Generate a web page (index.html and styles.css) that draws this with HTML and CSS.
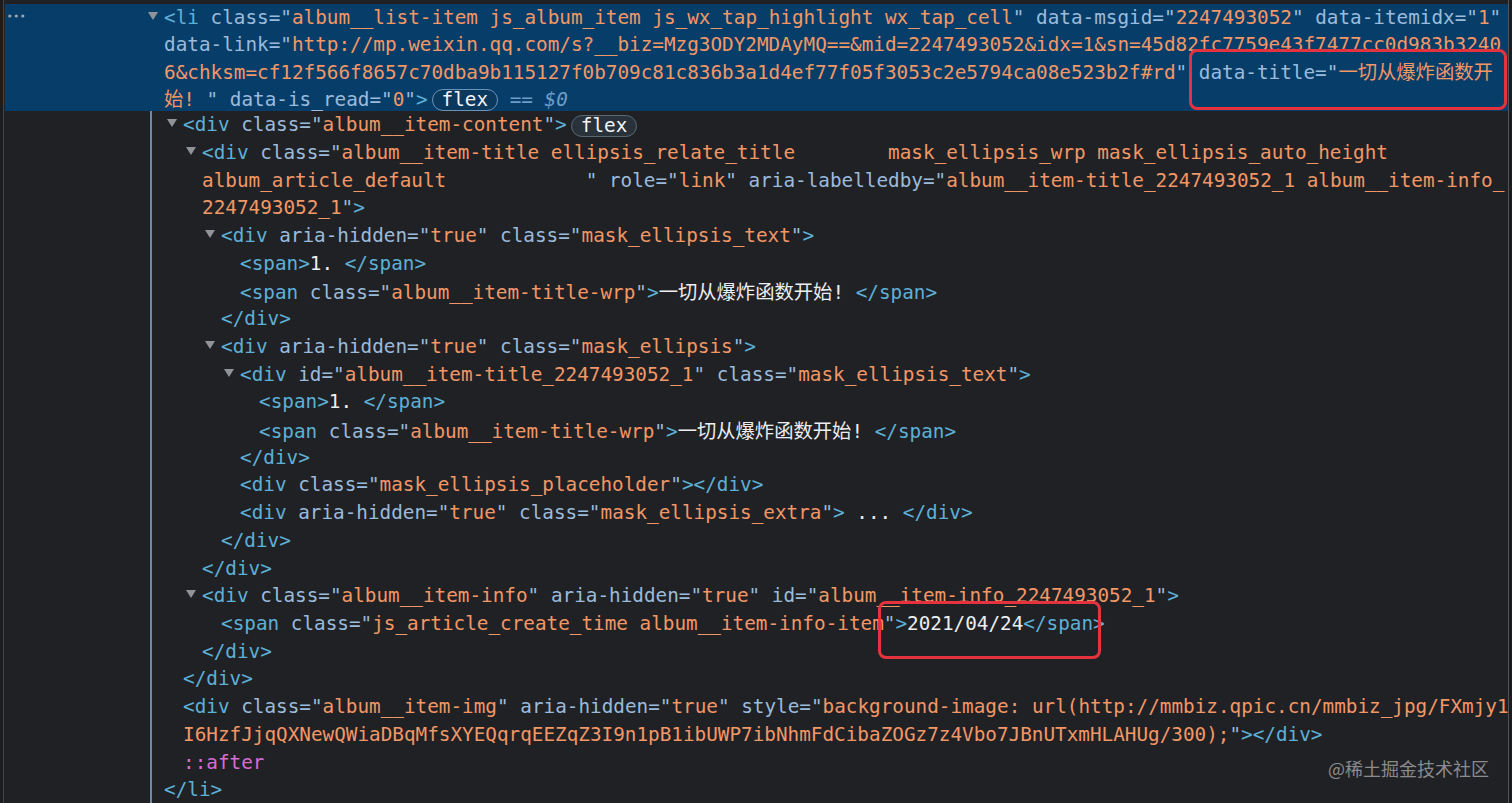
FILE: index.html
```html
<!DOCTYPE html>
<html lang="zh-CN">
<head>
<meta charset="utf-8">
<title>Elements</title>
<link rel="stylesheet" href="styles.css">
</head>
<body>
<div class="app">
  <div class="edge"></div>
  <div class="panel">
    <div class="selected">
      <div class="brow">
        <div class="gut">
          <svg class="dots" width="17" height="4" viewBox="0 0 17 4"><circle cx="1.8" cy="2" r="1.6"/><circle cx="8.3" cy="2" r="1.6"/><circle cx="14.8" cy="2" r="1.6"/></svg>
          <span class="tri"></span>
        </div>
        <span class="code"><span class="t">&lt;li</span> <span class="n">class="</span><span class="v">album__list-item js_album_item js_wx_tap_highlight wx_tap_cell</span><span class="n">"</span> <span class="n">data-msgid="</span><span class="v">2247493052</span><span class="n">"</span> <span class="n">data-itemidx="</span><span class="v">1</span><span class="n">"</span></span>
      </div>
      <div class="brow cont">
        <span class="code"><span class="n">data-link="</span><span class="v">http://mp.weixin.qq.com/s?__biz=Mzg3ODY2MDAyMQ==&amp;mid=2247493052&amp;idx=1&amp;sn=45d82fc7759e43f7477cc0d983b3240</span></span>
      </div>
      <div class="brow cont">
        <span class="code"><span class="v">6&amp;chksm=cf12f566f8657c70dba9b115127f0b709c81c836b3a1d4ef77f05f3053c2e5794ca08e523b2f#rd</span><span class="n">"</span> <span class="n">data-title="</span><span class="v">一切从爆炸函数开</span></span>
      </div>
      <div class="brow cont">
        <span class="code"><span class="v">始! </span><span class="n">"</span> <span class="n">data-is_read="</span><span class="v">0</span><span class="n">"</span><span class="t">&gt;</span><span class="badge badge-sel">flex</span><span class="eq"> == $0</span></span>
      </div>
    </div>

    <div class="tree">
      <div class="row l1"><span class="tri"></span><span class="code"><span class="t">&lt;div</span> <span class="n">class="</span><span class="v">album__item-content</span><span class="n">"</span><span class="t">&gt;</span><span class="badge">flex</span></span></div>
      <div class="row l2"><span class="tri"></span><span class="code"><span class="t">&lt;div</span> <span class="n">class="</span><span class="v">album__item-title ellipsis_relate_title        mask_ellipsis_wrp mask_ellipsis_auto_height</span></span></div>
      <div class="row l2"><span class="code"><span class="v">album_article_default            </span><span class="n">"</span> <span class="n">role="</span><span class="v">link</span><span class="n">"</span> <span class="n">aria-labelledby="</span><span class="v">album__item-title_2247493052_1 album__item-info_</span></span></div>
      <div class="row l2"><span class="code"><span class="v">2247493052_1</span><span class="n">"</span><span class="t">&gt;</span></span></div>
      <div class="row l3"><span class="tri"></span><span class="code"><span class="t">&lt;div</span> <span class="n">aria-hidden="</span><span class="v">true</span><span class="n">"</span> <span class="n">class="</span><span class="v">mask_ellipsis_text</span><span class="n">"</span><span class="t">&gt;</span></span></div>
      <div class="row l4"><span class="code"><span class="t">&lt;span&gt;</span><span class="x">1. </span><span class="t">&lt;/span&gt;</span></span></div>
      <div class="row l4"><span class="code"><span class="t">&lt;span</span> <span class="n">class="</span><span class="v">album__item-title-wrp</span><span class="n">"</span><span class="t">&gt;</span><span class="x">一切从爆炸函数开始! </span><span class="t">&lt;/span&gt;</span></span></div>
      <div class="row l3"><span class="code"><span class="t">&lt;/div&gt;</span></span></div>
      <div class="row l3"><span class="tri"></span><span class="code"><span class="t">&lt;div</span> <span class="n">aria-hidden="</span><span class="v">true</span><span class="n">"</span> <span class="n">class="</span><span class="v">mask_ellipsis</span><span class="n">"</span><span class="t">&gt;</span></span></div>
      <div class="row l4"><span class="tri"></span><span class="code"><span class="t">&lt;div</span> <span class="n">id="</span><span class="v">album__item-title_2247493052_1</span><span class="n">"</span> <span class="n">class="</span><span class="v">mask_ellipsis_text</span><span class="n">"</span><span class="t">&gt;</span></span></div>
      <div class="row l5"><span class="code"><span class="t">&lt;span&gt;</span><span class="x">1. </span><span class="t">&lt;/span&gt;</span></span></div>
      <div class="row l5"><span class="code"><span class="t">&lt;span</span> <span class="n">class="</span><span class="v">album__item-title-wrp</span><span class="n">"</span><span class="t">&gt;</span><span class="x">一切从爆炸函数开始! </span><span class="t">&lt;/span&gt;</span></span></div>
      <div class="row l4"><span class="code"><span class="t">&lt;/div&gt;</span></span></div>
      <div class="row l4"><span class="code"><span class="t">&lt;div</span> <span class="n">class="</span><span class="v">mask_ellipsis_placeholder</span><span class="n">"</span><span class="t">&gt;&lt;/div&gt;</span></span></div>
      <div class="row l4"><span class="code"><span class="t">&lt;div</span> <span class="n">aria-hidden="</span><span class="v">true</span><span class="n">"</span> <span class="n">class="</span><span class="v">mask_ellipsis_extra</span><span class="n">"</span><span class="t">&gt;</span><span class="x"> ... </span><span class="t">&lt;/div&gt;</span></span></div>
      <div class="row l3"><span class="code"><span class="t">&lt;/div&gt;</span></span></div>
      <div class="row l2"><span class="code"><span class="t">&lt;/div&gt;</span></span></div>
      <div class="row l2"><span class="tri"></span><span class="code"><span class="t">&lt;div</span> <span class="n">class="</span><span class="v">album__item-info</span><span class="n">"</span> <span class="n">aria-hidden="</span><span class="v">true</span><span class="n">"</span> <span class="n">id="</span><span class="v">album__item-info_2247493052_1</span><span class="n">"</span><span class="t">&gt;</span></span></div>
      <div class="row l3"><span class="code"><span class="t">&lt;span</span> <span class="n">class="</span><span class="v">js_article_create_time album__item-info-item</span><span class="n">"</span><span class="t">&gt;</span><span class="x">2021/04/24</span><span class="t">&lt;/span&gt;</span></span></div>
      <div class="row l2"><span class="code"><span class="t">&lt;/div&gt;</span></span></div>
      <div class="row l1"><span class="code"><span class="t">&lt;/div&gt;</span></span></div>
      <div class="row l1"><span class="code"><span class="t">&lt;div</span> <span class="n">class="</span><span class="v">album__item-img</span><span class="n">"</span> <span class="n">aria-hidden="</span><span class="v">true</span><span class="n">"</span> <span class="n">style="</span><span class="v">background-image: url(http://mmbiz.qpic.cn/mmbiz_jpg/FXmjy1</span></span></div>
      <div class="row l1"><span class="code"><span class="v">I6HzfJjqQXNewQWiaDBqMfsXYEQqrqEEZqZ3I9n1pB1ibUWP7ibNhmFdCibaZOGz7z4Vbo7JBnUTxmHLAHUg/300);</span><span class="n">"</span><span class="t">&gt;&lt;/div&gt;</span></span></div>
      <div class="row l1"><span class="code"><span class="ps">::after</span></span></div>
      <div class="row l0"><span class="code"><span class="t">&lt;/li&gt;</span></span></div>
    </div>
  </div>
  <div class="rest"></div>

  <div class="mark m1"></div>
  <div class="mark m2"></div>
  <div class="wm">@稀土掘金技术社区</div>
</div>
</body>
</html>
```

FILE: styles.css
```css
* { box-sizing: border-box; }
html, body { margin: 0; padding: 0; }
body {
  background: #202124;
  width: 1512px;
  height: 803px;
  overflow: hidden;
  font-family: "DejaVu Sans Mono", "Noto Sans CJK SC", monospace;
  font-size: 19.32px;
  color: #e8eaed;
}
.app {
  position: relative;
  display: flex;
  height: 803px;
}
.edge {
  width: 3px;
  flex: none;
  background: #1c1c1e;
}
.panel {
  width: 1506px;
  flex: none;
  border-left: 1px solid #414448;
  border-right: 1px solid #505357;
  display: flex;
  flex-direction: column;
  padding-top: 4px;
}
.rest { flex: 1; background: #1c1c1e; }

/* selected node band */
.selected {
  margin-left: 1px;
  background: #073e69;
}
.brow {
  display: flex;
  align-items: center;
  height: 26.75px;
}
.brow.cont { padding-left: 159px; }
.gut {
  width: 159px;
  flex: none;
  display: flex;
  align-items: center;
  justify-content: space-between;
  padding: 0 6.5px 0 3px;
}
.dots { fill: #a3a7ad; display: block; margin-bottom: 2px; }

/* tree */
.tree {
  margin-left: 146px;
  border-left: 2px solid #6c8bab;
  flex: 1;
}
.row {
  display: flex;
  align-items: center;
  height: 27.71px;
}
.l0 { padding-left: 12px; }
.l1 { padding-left: 31px; }
.l2 { padding-left: 50px; }
.l3 { padding-left: 69px; }
.l4 { padding-left: 88px; }
.l5 { padding-left: 107px; }

.row .tri {
  margin-left: -16.5px;
  margin-right: 6.5px;
}
.tri {
  flex: none;
  width: 0;
  height: 0;
  border-left: 5px solid transparent;
  border-right: 5px solid transparent;
  border-top: 8px solid #909398;
  margin-bottom: 3px;
}

.code { white-space: pre; }
.t { color: #5db0d7; }
.n { color: #9bbbdc; }
.v { color: #f29766; }
.x { color: #eceef1; }
.ps { color: #d66cd6; }
.eq { color: #6d9dcb; font-style: italic; }

.badge {
  display: inline-block;
  vertical-align: middle;
  height: 22px;
  line-height: 20px;
  padding: 0 9px;
  margin-left: 4px;
  border: 1px solid #5a6773;
  border-radius: 11px;
  background: #29323b;
  color: #f4f5f7;
}
.badge-sel {
  background: #0b385d;
  border-color: #6a93b8;
}

/* annotation overlays */
.mark {
  position: absolute;
  border: 3px solid #e4333f;
  border-radius: 8px;
}
.m1 { left: 1189px; top: 49px; width: 318px; height: 61px; }
.m2 { left: 878px; top: 601px; width: 223px; height: 58px; }

.wm {
  position: absolute;
  left: 1328px;
  top: 758px;
  font-family: "Noto Sans CJK SC", sans-serif;
  font-size: 18px;
  line-height: 20px;
  color: #8a8b8d;
}
```
